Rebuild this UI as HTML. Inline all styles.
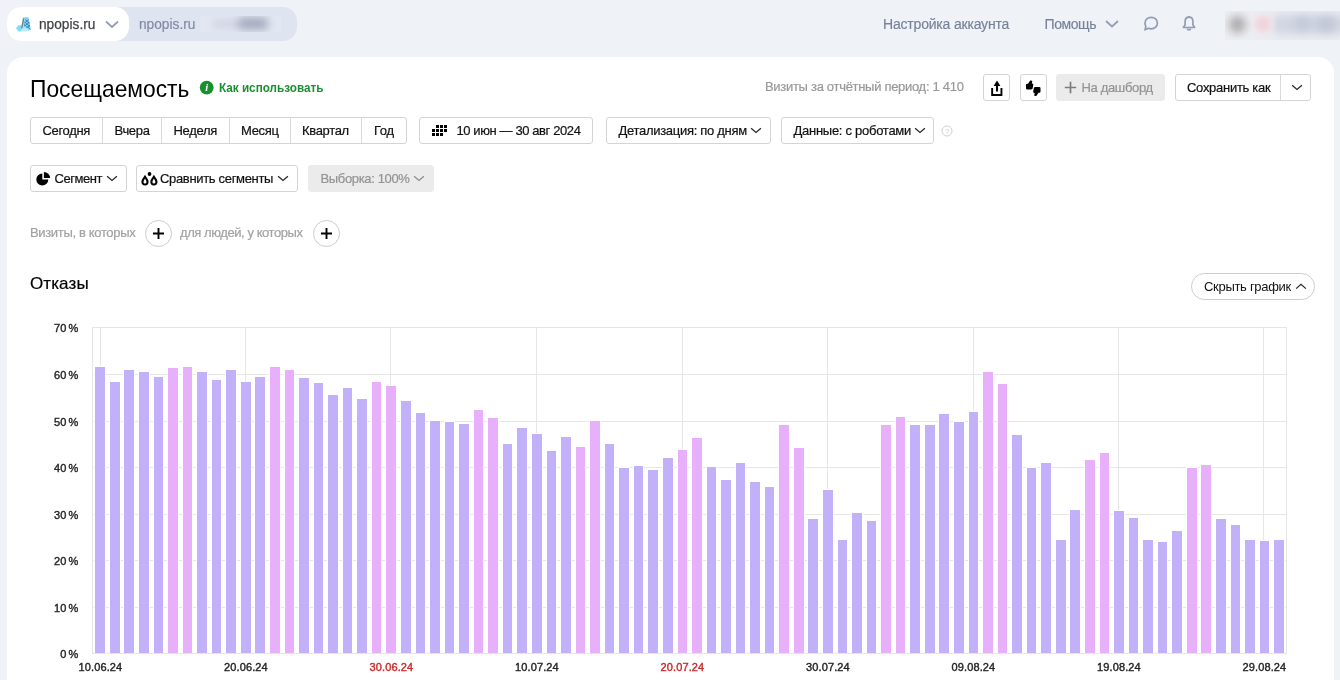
<!DOCTYPE html>
<html lang="ru">
<head>
<meta charset="utf-8">
<title>Посещаемость</title>
<style>
*{box-sizing:border-box;margin:0;padding:0}
html,body{width:1340px;height:680px;overflow:hidden;background:#eff2f7;font-family:"Liberation Sans",sans-serif;color:#000}
#root{will-change:transform;position:relative;width:1340px;height:680px;overflow:hidden}
.abs{position:absolute;white-space:nowrap}
.card{position:absolute;left:7px;top:57px;width:1327px;height:640px;background:#fff;border-radius:16px 16px 0 0}
.pill-out{position:absolute;left:7px;top:7px;width:290px;height:34px;background:#dfe5f0;border-radius:14px}
.pill-in{position:absolute;left:7px;top:7px;width:122px;height:34px;background:#fff;border-radius:14px}
.hdr{font-size:14px;line-height:16px;color:#78819a;-webkit-text-stroke:.15px}
.btn{letter-spacing:-.33px;position:absolute;height:27px;border:1px solid #d4d4d4;border-radius:3px;background:#fff;font-size:13px;line-height:25px;white-space:nowrap;color:#111;-webkit-text-stroke:.2px}
.btn.gray{background:#ebebeb;border-color:#ebebeb;color:#939393}
.t{position:absolute;white-space:nowrap}
.sep{position:absolute;top:0;width:1px;height:25px;background:#d9d9d9}
.circ{position:absolute;width:27px;height:27px;border:1px solid #ccc;border-radius:50%;background:#fff}
.chart{position:absolute;left:0;top:0}
.ax text{font-family:"Liberation Sans",sans-serif;font-size:11px;fill:#262626;stroke:#262626;stroke-width:.4px;letter-spacing:.12px}
.ax.y text{word-spacing:-1px}
.ax text.red{fill:#cc2b2b;stroke:#cc2b2b}
svg{overflow:visible}
</style>
</head>
<body>
<div id="root">
  <!-- top bar -->
  <div class="pill-out"></div>
  <div class="pill-in"></div>
  <svg class="abs" style="left:14px;top:15px" width="18" height="18" viewBox="14 15 18 18">
    <path d="M16 28.3L18.2 25.4L21.8 24.8L21.6 31L18.8 31.8Z" fill="#7fdcf5"/>
    <path d="M22.9 17.1L28.4 17.4L30.7 29.6L26.5 31.3L20.8 31.3Z" fill="#a2e6f8"/>
    <path d="M24.6 17.3L28.4 17.4L30.7 29.6L29 30.3Z" fill="#7fd4ef"/>
    <path d="M24.8 19.4L29.3 23.3M24.3 21.8L30 26.6M23.9 24.3L30.4 29.3M28.8 19.6L24.3 23.2M29.4 22.3L24 26.3M30 25.3L25.5 28.5" stroke="#2a80b6" stroke-width=".9" fill="none"/>
    <path d="M23.7 18.4L21.7 28.6" stroke="#777c86" stroke-width="1.3"/>
    <path d="M22 28.5L26 27.5L29 30.4L26.5 31.3L21 31.3Z" fill="#b5ecfa"/>
  </svg>
  <div class="t" style="left:39px;top:14.5px;font-size:15.5px;line-height:18px;color:#3d3f45;-webkit-text-stroke:.25px;transform:scaleX(.884);transform-origin:0 50%">npopis.ru</div>
  <svg class="abs" style="left:104px;top:20px" width="16" height="9" viewBox="0 0 16 9"><path d="M2 1.5 L8 7 L14 1.5" fill="none" stroke="#929cb5" stroke-width="1.7"/></svg>
  <div class="t" style="left:138.5px;top:14.5px;font-size:15.5px;line-height:18px;color:#808aa3;-webkit-text-stroke:.2px;transform:scaleX(.884);transform-origin:0 50%">npopis.ru</div>
  <div class="abs" style="left:200px;top:16px;width:81px;height:16px;background:#e2e7f1;overflow:hidden">
    <div class="abs" style="left:12px;top:3px;width:56px;height:10px;background:#d3d8e5;filter:blur(3px);border-radius:5px"></div>
    <div class="abs" style="left:38px;top:2px;width:30px;height:11px;background:#a4a9be;filter:blur(4.5px);border-radius:6px"></div>
  </div>

  <div class="t hdr" style="left:883px;top:16px;letter-spacing:-.19px">Настройка аккаунта</div>
  <div class="t hdr" style="left:1044.5px;top:16px;letter-spacing:-.43px">Помощь</div>
  <svg class="abs" style="left:1104px;top:19px" width="16" height="10" viewBox="0 0 16 10"><path d="M2 2 L8 7.5 L14 2" fill="none" stroke="#929cb5" stroke-width="1.7"/></svg>
  <svg class="abs" style="left:1142px;top:15px" width="18" height="18" viewBox="0 0 18 18"><path d="M9.2 2.3c3.5 0 6.2 2.5 6.2 5.7s-2.7 5.8-6.2 5.8c-.9 0-1.8-.2-2.6-.5L3 14.8l.9-3.2C3.3 10.6 3 9.4 3 8c0-3.2 2.7-5.7 6.2-5.7z" fill="none" stroke="#929cb5" stroke-width="1.7" stroke-linejoin="round"/></svg>
  <svg class="abs" style="left:1181px;top:15px" width="16" height="18" viewBox="0 0 16 18"><path d="M8 2.2c2.3 0 3.9 1.8 3.9 4.3v3.3l1.7 2.7H2.4l1.7-2.7V6.5c0-2.5 1.6-4.3 3.9-4.3z" fill="none" stroke="#929cb5" stroke-width="1.7" stroke-linejoin="round"/><path d="M6.3 13.5c.2.9.9 1.5 1.7 1.5s1.5-.6 1.7-1.5" fill="none" stroke="#929cb5" stroke-width="1.7"/><path d="M8 1v1.5" stroke="#929cb5" stroke-width="1.7"/></svg>
  <div class="abs" style="left:1225px;top:11px;width:115px;height:29px;background:#ebedf2;overflow:hidden">
    <div class="abs" style="left:48px;top:4px;width:72px;height:19px;background:#d0d5e1;filter:blur(4px);border-radius:6px"></div>
    <div class="abs" style="left:70px;top:6px;width:16px;height:13px;background:#c4c9d8;filter:blur(4px);border-radius:6px"></div>
    <div class="abs" style="left:92px;top:6px;width:18px;height:14px;background:#c1c6d6;filter:blur(4px);border-radius:6px"></div>
    <div class="abs" style="left:-1px;top:0;width:27px;height:27px;border-radius:50%;background:radial-gradient(circle,#b0b0b0 0,#bdbdbd 25%,rgba(208,208,208,.6) 52%,rgba(235,237,242,0) 85%);filter:blur(1.5px)"></div>
    <div class="abs" style="left:26px;top:1px;width:24px;height:24px;border-radius:50%;background:radial-gradient(circle,#efd2d9 0,#f0d9de 35%,rgba(240,228,232,.5) 60%,rgba(235,237,242,0) 90%);filter:blur(1.5px)"></div>
  </div>

  <div class="card"></div>

  <!-- title row -->
  <div class="t" style="left:30px;top:74px;font-size:24px;line-height:30px;color:#000;transform:scaleX(.9505);transform-origin:0 50%">Посещаемость</div>
  <svg class="abs" style="left:199px;top:80px" width="15" height="15" viewBox="0 0 15 15"><circle cx="7.7" cy="7.6" r="6.9" fill="#18902f"/><text x="7.6" y="11.3" text-anchor="middle" font-family="Liberation Serif,serif" font-weight="bold" font-style="italic" font-size="10.5" fill="#fff">i</text></svg>
  <div class="t" style="left:219px;top:79.5px;font-size:13px;line-height:15px;font-weight:bold;color:#18902f;transform:scaleX(.901);transform-origin:0 50%">Как использовать</div>

  <div class="t" style="left:765px;top:79px;font-size:13px;line-height:16px;color:#999;letter-spacing:-.3px;-webkit-text-stroke:.2px">Визиты за отчётный период: 1 410</div>

  <div class="btn" style="left:983px;top:74px;width:27px">
    <svg class="abs" style="left:0;top:0" width="25" height="25" viewBox="0 0 25 25"><path d="M8.15 13V19.95H17.45V13" fill="none" stroke="#000" stroke-width="1.9"/><path d="M13 5.6L16.4 11H14.05V16.6H11.95V11H9.6Z" fill="#000"/></svg>
  </div>
  <div class="btn" style="left:1020px;top:74px;width:27px">
    <svg class="abs" style="left:0;top:0" width="25" height="25" viewBox="0 0 25 25"><path d="M5 10Q5 8.8 6.2 8.8H7L9.2 5.6Q10.4 5.1 11.3 6.1L10.8 8.6H11.3Q12.5 8.7 12.3 10L11.7 13.3Q11.4 14.4 10.2 14.4H6.2Q5 14.4 5 13.2Z" fill="#000"/><path d="M19.5 16.5Q19.5 17.7 18.3 17.7H17.5L15.3 20.9Q14.1 21.4 13.2 20.4L13.7 17.9H13.2Q12 17.8 12.2 16.5L12.8 13.2Q13.1 12.1 14.3 12.1H18.3Q19.5 12.1 19.5 13.3Z" fill="#000"/></svg>
  </div>
  <div class="btn gray" style="left:1056px;top:74px;width:109px">
    <svg class="abs" style="left:6.5px;top:6.4px" width="13" height="13" viewBox="0 0 13 13"><path d="M6.5 .8V12.2M.8 6.5H12.2" stroke="#7c7c7c" stroke-width="1.7"/></svg>
    <span class="t" style="left:24.5px;top:0;letter-spacing:-.34px">На дашборд</span>
  </div>
  <div class="btn" style="left:1175px;top:74px;width:136px">
    <span class="t" style="left:11px;top:0;letter-spacing:-.285px">Сохранить как</span>
    <div class="sep" style="left:104px"></div>
    <svg class="abs" style="left:115px;top:8.8px" width="12" height="7" viewBox="0 0 12 7"><path d="M1.1 1.2 L6 5.5 L10.9 1.2" fill="none" stroke="#262626" stroke-width="1.25"/></svg>
  </div>

  <!-- period row -->
  <div class="btn" style="left:30px;top:117px;width:377px">
    <span class="t" style="left:11.5px">Сегодня</span><div class="sep" style="left:71px"></div>
    <span class="t" style="left:83.5px">Вчера</span><div class="sep" style="left:130px"></div>
    <span class="t" style="left:142.5px">Неделя</span><div class="sep" style="left:198px"></div>
    <span class="t" style="left:210px">Месяц</span><div class="sep" style="left:259px"></div>
    <span class="t" style="left:271px">Квартал</span><div class="sep" style="left:330px"></div>
    <span class="t" style="left:343px">Год</span>
  </div>
  <div class="btn" style="left:419px;top:117px;width:174px">
    <svg class="abs" style="left:11.5px;top:6.5px" width="15" height="11" viewBox="0 0 15 11" shape-rendering="crispEdges"><g fill="#000"><rect x="4" y="0" width="3" height="3"/><rect x="8" y="0" width="3" height="3"/><rect x="12" y="0" width="3" height="3"/><rect x="0" y="4" width="3" height="3"/><rect x="4" y="4" width="3" height="3"/><rect x="8" y="4" width="3" height="3"/><rect x="12" y="4" width="3" height="3"/><rect x="0" y="8" width="3" height="3"/><rect x="4" y="8" width="3" height="3"/><rect x="8" y="8" width="3" height="3"/></g></svg>
    <span class="t" style="left:36.5px;letter-spacing:-.4px">10 июн — 30 авг 2024</span>
  </div>
  <div class="btn" style="left:606px;top:117px;width:165px">
    <span class="t" style="left:11.5px;letter-spacing:-.3px">Детализация: по дням</span>
    <svg class="abs" style="left:143.2px;top:8.8px" width="12" height="7" viewBox="0 0 12 7"><path d="M1.1 1.2 L6 5.5 L10.9 1.2" fill="none" stroke="#262626" stroke-width="1.25"/></svg>
  </div>
  <div class="btn" style="left:781px;top:117px;width:153px">
    <span class="t" style="left:11.5px;letter-spacing:-.27px">Данные: с роботами</span>
    <svg class="abs" style="left:131.9px;top:8.8px" width="12" height="7" viewBox="0 0 12 7"><path d="M1.1 1.2 L6 5.5 L10.9 1.2" fill="none" stroke="#262626" stroke-width="1.25"/></svg>
  </div>
  <svg class="abs" style="left:941px;top:125px" width="12" height="12" viewBox="0 0 12 12"><circle cx="6" cy="6" r="5" fill="none" stroke="#d0d0d0" stroke-width="1"/><text x="6" y="8.8" text-anchor="middle" font-family="Liberation Sans,sans-serif" font-size="7.5" fill="#c8c8c8">?</text></svg>

  <!-- segment row -->
  <div class="btn" style="left:30px;top:165px;width:97px">
    <svg class="abs" style="left:0;top:0" width="25" height="25" viewBox="0 0 25 25"><path d="M11.3 7.4A6 6 0 1 0 17.3 13.4H11.3Z" fill="#000"/><path d="M12.9 5.9A6.2 6.2 0 0 1 19.1 12.1H12.9Z" fill="#000"/></svg>
    <span class="t" style="left:23.5px;letter-spacing:-.45px">Сегмент</span>
    <svg class="abs" style="left:75.2px;top:8.8px" width="12" height="7" viewBox="0 0 12 7"><path d="M1.1 1.2 L6 5.5 L10.9 1.2" fill="none" stroke="#262626" stroke-width="1.25"/></svg>
  </div>
  <div class="btn" style="left:136px;top:165px;width:162px">
    <svg class="abs" style="left:0;top:0" width="25" height="25" viewBox="0 0 25 25"><path d="M8.0 8.8C9.5 11.5 11.6 13.5 11.6 15.8A3.6 3.6 0 0 1 4.4 15.8C4.4 13.5 6.5 11.5 8.0 8.8Z" fill="#000"/><path d="M8.0 12.6C8.7 14 9.5 15 9.5 16.1A1.5 1.5 0 0 1 6.5 16.1C6.5 15 7.3 14 8.0 12.6Z" fill="#fff"/><path d="M16.9 8.8C18.4 11.5 20.5 13.5 20.5 15.8A3.6 3.6 0 0 1 13.3 15.8C13.3 13.5 15.4 11.5 16.9 8.8Z" fill="#000"/><path d="M16.9 12.6C17.6 14 18.4 15 18.4 16.1A1.5 1.5 0 0 1 15.4 16.1C15.4 15 16.2 14 16.9 12.6Z" fill="#fff"/><circle cx="12.5" cy="8" r="1.9" fill="#000"/></svg>
    <span class="t" style="left:23px">Сравнить сегменты</span>
    <svg class="abs" style="left:140px;top:8.8px" width="12" height="7" viewBox="0 0 12 7"><path d="M1.1 1.2 L6 5.5 L10.9 1.2" fill="none" stroke="#262626" stroke-width="1.25"/></svg>
  </div>
  <div class="btn gray" style="left:308px;top:165px;width:126px">
    <span class="t" style="left:11.5px;letter-spacing:-.35px">Выборка: 100%</span>
    <svg class="abs" style="left:104px;top:8.8px" width="12" height="7" viewBox="0 0 12 7"><path d="M1.1 1.2 L6 5.5 L10.9 1.2" fill="none" stroke="#8c8c8c" stroke-width="1.25"/></svg>
  </div>

  <!-- filter row -->
  <div class="t" style="left:30px;top:225px;font-size:13px;line-height:16px;-webkit-text-stroke:.2px;color:#a2a2a2;letter-spacing:-.34px">Визиты, в которых</div>
  <div class="circ" style="left:145px;top:220px"><svg class="abs" style="left:7px;top:7px" width="11" height="11" viewBox="0 0 11 11"><path d="M5.5 0V11M0 5.5H11" stroke="#000" stroke-width="1.9"/></svg></div>
  <div class="t" style="left:180px;top:225px;font-size:13px;line-height:16px;-webkit-text-stroke:.2px;color:#a2a2a2;letter-spacing:-.43px">для людей, у которых</div>
  <div class="circ" style="left:313px;top:220px"><svg class="abs" style="left:7px;top:7px" width="11" height="11" viewBox="0 0 11 11"><path d="M5.5 0V11M0 5.5H11" stroke="#000" stroke-width="1.9"/></svg></div>

  <div class="t" style="left:30px;top:273px;font-size:17px;line-height:22px;color:#000;letter-spacing:.1px;-webkit-text-stroke:.2px">Отказы</div>
  <div class="abs" style="left:1191px;top:273px;width:124px;height:27px;border:1px solid #ccc;border-radius:14px;background:#fff;font-size:13px;line-height:25px;color:#111">
    <span class="t" style="left:12px;top:0;letter-spacing:-.3px">Скрыть график</span>
    <svg class="abs" style="left:103px;top:9px" width="12" height="7" viewBox="0 0 12 7"><path d="M1.1 5.6 L6 1.3 L10.9 5.6" fill="none" stroke="#262626" stroke-width="1.25"/></svg>
  </div>

<svg class="chart" width="1340" height="680" viewBox="0 0 1340 680">
<g stroke="#e6e6e6" stroke-width="1" shape-rendering="crispEdges" fill="none">
<path d="M92 653.5H1287"/>
<path d="M92 607.5H1287"/>
<path d="M92 560.5H1287"/>
<path d="M92 514.5H1287"/>
<path d="M92 467.5H1287"/>
<path d="M92 421.5H1287"/>
<path d="M92 374.5H1287"/>
<path d="M92 327.5H1287"/>
<path d="M100.5 327V653"/>
<path d="M245.5 327V653"/>
<path d="M390.5 327V653"/>
<path d="M536.5 327V653"/>
<path d="M682.5 327V653"/>
<path d="M827.5 327V653"/>
<path d="M973.5 327V653"/>
<path d="M1118.5 327V653"/>
<path d="M1263.5 327V653"/>
<path d="M92.5 327V653"/><path d="M1286.5 327V653"/>
</g>
<clipPath id="cp"><rect x="93" y="320" width="1193" height="333"/></clipPath>
<g stroke="#ffffff" stroke-width="1" shape-rendering="crispEdges" clip-path="url(#cp)">
<rect x="94.5" y="366.5" width="11" height="289" fill="#c2b0f9"/>
<rect x="109.5" y="381.5" width="11" height="274" fill="#c2b0f9"/>
<rect x="123.5" y="369.5" width="11" height="286" fill="#c2b0f9"/>
<rect x="138.5" y="371.5" width="11" height="284" fill="#c2b0f9"/>
<rect x="153.5" y="376.5" width="10" height="279" fill="#c2b0f9"/>
<rect x="167.5" y="367.5" width="11" height="288" fill="#e8b0fa"/>
<rect x="182.5" y="366.5" width="10" height="289" fill="#e8b0fa"/>
<rect x="196.5" y="371.5" width="11" height="284" fill="#c2b0f9"/>
<rect x="211.5" y="379.5" width="10" height="276" fill="#c2b0f9"/>
<rect x="225.5" y="369.5" width="11" height="286" fill="#c2b0f9"/>
<rect x="240.5" y="381.5" width="11" height="274" fill="#c2b0f9"/>
<rect x="254.5" y="376.5" width="11" height="279" fill="#c2b0f9"/>
<rect x="269.5" y="366.5" width="11" height="289" fill="#e8b0fa"/>
<rect x="284.5" y="369.5" width="10" height="286" fill="#e8b0fa"/>
<rect x="298.5" y="377.5" width="11" height="278" fill="#c2b0f9"/>
<rect x="313.5" y="382.5" width="10" height="273" fill="#c2b0f9"/>
<rect x="327.5" y="394.5" width="11" height="261" fill="#c2b0f9"/>
<rect x="342.5" y="387.5" width="10" height="268" fill="#c2b0f9"/>
<rect x="356.5" y="398.5" width="11" height="257" fill="#c2b0f9"/>
<rect x="371.5" y="381.5" width="10" height="274" fill="#e8b0fa"/>
<rect x="385.5" y="385.5" width="11" height="270" fill="#e8b0fa"/>
<rect x="400.5" y="400.5" width="11" height="255" fill="#c2b0f9"/>
<rect x="415.5" y="412.5" width="10" height="243" fill="#c2b0f9"/>
<rect x="429.5" y="420.5" width="11" height="235" fill="#c2b0f9"/>
<rect x="444.5" y="421.5" width="10" height="234" fill="#c2b0f9"/>
<rect x="458.5" y="423.5" width="11" height="232" fill="#c2b0f9"/>
<rect x="473.5" y="409.5" width="10" height="246" fill="#e8b0fa"/>
<rect x="487.5" y="417.5" width="11" height="238" fill="#e8b0fa"/>
<rect x="502.5" y="443.5" width="10" height="212" fill="#c2b0f9"/>
<rect x="516.5" y="427.5" width="11" height="228" fill="#c2b0f9"/>
<rect x="531.5" y="433.5" width="11" height="222" fill="#c2b0f9"/>
<rect x="546.5" y="450.5" width="10" height="205" fill="#c2b0f9"/>
<rect x="560.5" y="436.5" width="11" height="219" fill="#c2b0f9"/>
<rect x="575.5" y="446.5" width="10" height="209" fill="#e8b0fa"/>
<rect x="589.5" y="420.5" width="11" height="235" fill="#e8b0fa"/>
<rect x="604.5" y="443.5" width="10" height="212" fill="#c2b0f9"/>
<rect x="618.5" y="467.5" width="11" height="188" fill="#c2b0f9"/>
<rect x="633.5" y="465.5" width="10" height="190" fill="#c2b0f9"/>
<rect x="647.5" y="469.5" width="11" height="186" fill="#c2b0f9"/>
<rect x="662.5" y="457.5" width="11" height="198" fill="#c2b0f9"/>
<rect x="677.5" y="449.5" width="10" height="206" fill="#e8b0fa"/>
<rect x="691.5" y="437.5" width="11" height="218" fill="#e8b0fa"/>
<rect x="706.5" y="466.5" width="10" height="189" fill="#c2b0f9"/>
<rect x="720.5" y="479.5" width="11" height="176" fill="#c2b0f9"/>
<rect x="735.5" y="462.5" width="10" height="193" fill="#c2b0f9"/>
<rect x="749.5" y="481.5" width="11" height="174" fill="#c2b0f9"/>
<rect x="764.5" y="486.5" width="10" height="169" fill="#c2b0f9"/>
<rect x="778.5" y="424.5" width="11" height="231" fill="#e8b0fa"/>
<rect x="793.5" y="447.5" width="11" height="208" fill="#e8b0fa"/>
<rect x="807.5" y="518.5" width="11" height="137" fill="#c2b0f9"/>
<rect x="822.5" y="489.5" width="11" height="166" fill="#c2b0f9"/>
<rect x="837.5" y="539.5" width="10" height="116" fill="#c2b0f9"/>
<rect x="851.5" y="512.5" width="11" height="143" fill="#c2b0f9"/>
<rect x="866.5" y="520.5" width="10" height="135" fill="#c2b0f9"/>
<rect x="880.5" y="424.5" width="11" height="231" fill="#e8b0fa"/>
<rect x="895.5" y="416.5" width="10" height="239" fill="#e8b0fa"/>
<rect x="909.5" y="424.5" width="11" height="231" fill="#c2b0f9"/>
<rect x="924.5" y="424.5" width="11" height="231" fill="#c2b0f9"/>
<rect x="938.5" y="413.5" width="11" height="242" fill="#c2b0f9"/>
<rect x="953.5" y="421.5" width="11" height="234" fill="#c2b0f9"/>
<rect x="968.5" y="411.5" width="10" height="244" fill="#c2b0f9"/>
<rect x="982.5" y="371.5" width="11" height="284" fill="#e8b0fa"/>
<rect x="997.5" y="383.5" width="10" height="272" fill="#e8b0fa"/>
<rect x="1011.5" y="434.5" width="11" height="221" fill="#c2b0f9"/>
<rect x="1026.5" y="467.5" width="10" height="188" fill="#c2b0f9"/>
<rect x="1040.5" y="462.5" width="11" height="193" fill="#c2b0f9"/>
<rect x="1055.5" y="539.5" width="11" height="116" fill="#c2b0f9"/>
<rect x="1069.5" y="509.5" width="11" height="146" fill="#c2b0f9"/>
<rect x="1084.5" y="459.5" width="11" height="196" fill="#e8b0fa"/>
<rect x="1099.5" y="452.5" width="10" height="203" fill="#e8b0fa"/>
<rect x="1113.5" y="510.5" width="11" height="145" fill="#c2b0f9"/>
<rect x="1128.5" y="517.5" width="10" height="138" fill="#c2b0f9"/>
<rect x="1142.5" y="539.5" width="11" height="116" fill="#c2b0f9"/>
<rect x="1157.5" y="541.5" width="10" height="114" fill="#c2b0f9"/>
<rect x="1171.5" y="530.5" width="11" height="125" fill="#c2b0f9"/>
<rect x="1186.5" y="467.5" width="11" height="188" fill="#e8b0fa"/>
<rect x="1200.5" y="464.5" width="11" height="191" fill="#e8b0fa"/>
<rect x="1215.5" y="518.5" width="11" height="137" fill="#c2b0f9"/>
<rect x="1230.5" y="524.5" width="10" height="131" fill="#c2b0f9"/>
<rect x="1244.5" y="539.5" width="11" height="116" fill="#c2b0f9"/>
<rect x="1259.5" y="540.5" width="10" height="115" fill="#c2b0f9"/>
<rect x="1273.5" y="539.5" width="11" height="116" fill="#c2b0f9"/>
</g>
<g class="ax y" text-anchor="end">
<text x="78.5" y="657.5">0 %</text>
<text x="78.5" y="611.5">10 %</text>
<text x="78.5" y="564.5">20 %</text>
<text x="78.5" y="518.5">30 %</text>
<text x="78.5" y="471.5">40 %</text>
<text x="78.5" y="425.5">50 %</text>
<text x="78.5" y="378.5">60 %</text>
<text x="78.5" y="331.5">70 %</text>
</g>
<g class="ax" text-anchor="middle">
<text x="100.4" y="671">10.06.24</text>
<text x="245.9" y="671">20.06.24</text>
<text x="391.4" y="671" class="red">30.06.24</text>
<text x="536.9" y="671">10.07.24</text>
<text x="682.4" y="671" class="red">20.07.24</text>
<text x="827.9" y="671">30.07.24</text>
<text x="973.4" y="671">09.08.24</text>
<text x="1118.9" y="671">19.08.24</text>
<text x="1264.4" y="671">29.08.24</text>
</g>
</svg>
</div>
</body>
</html>
